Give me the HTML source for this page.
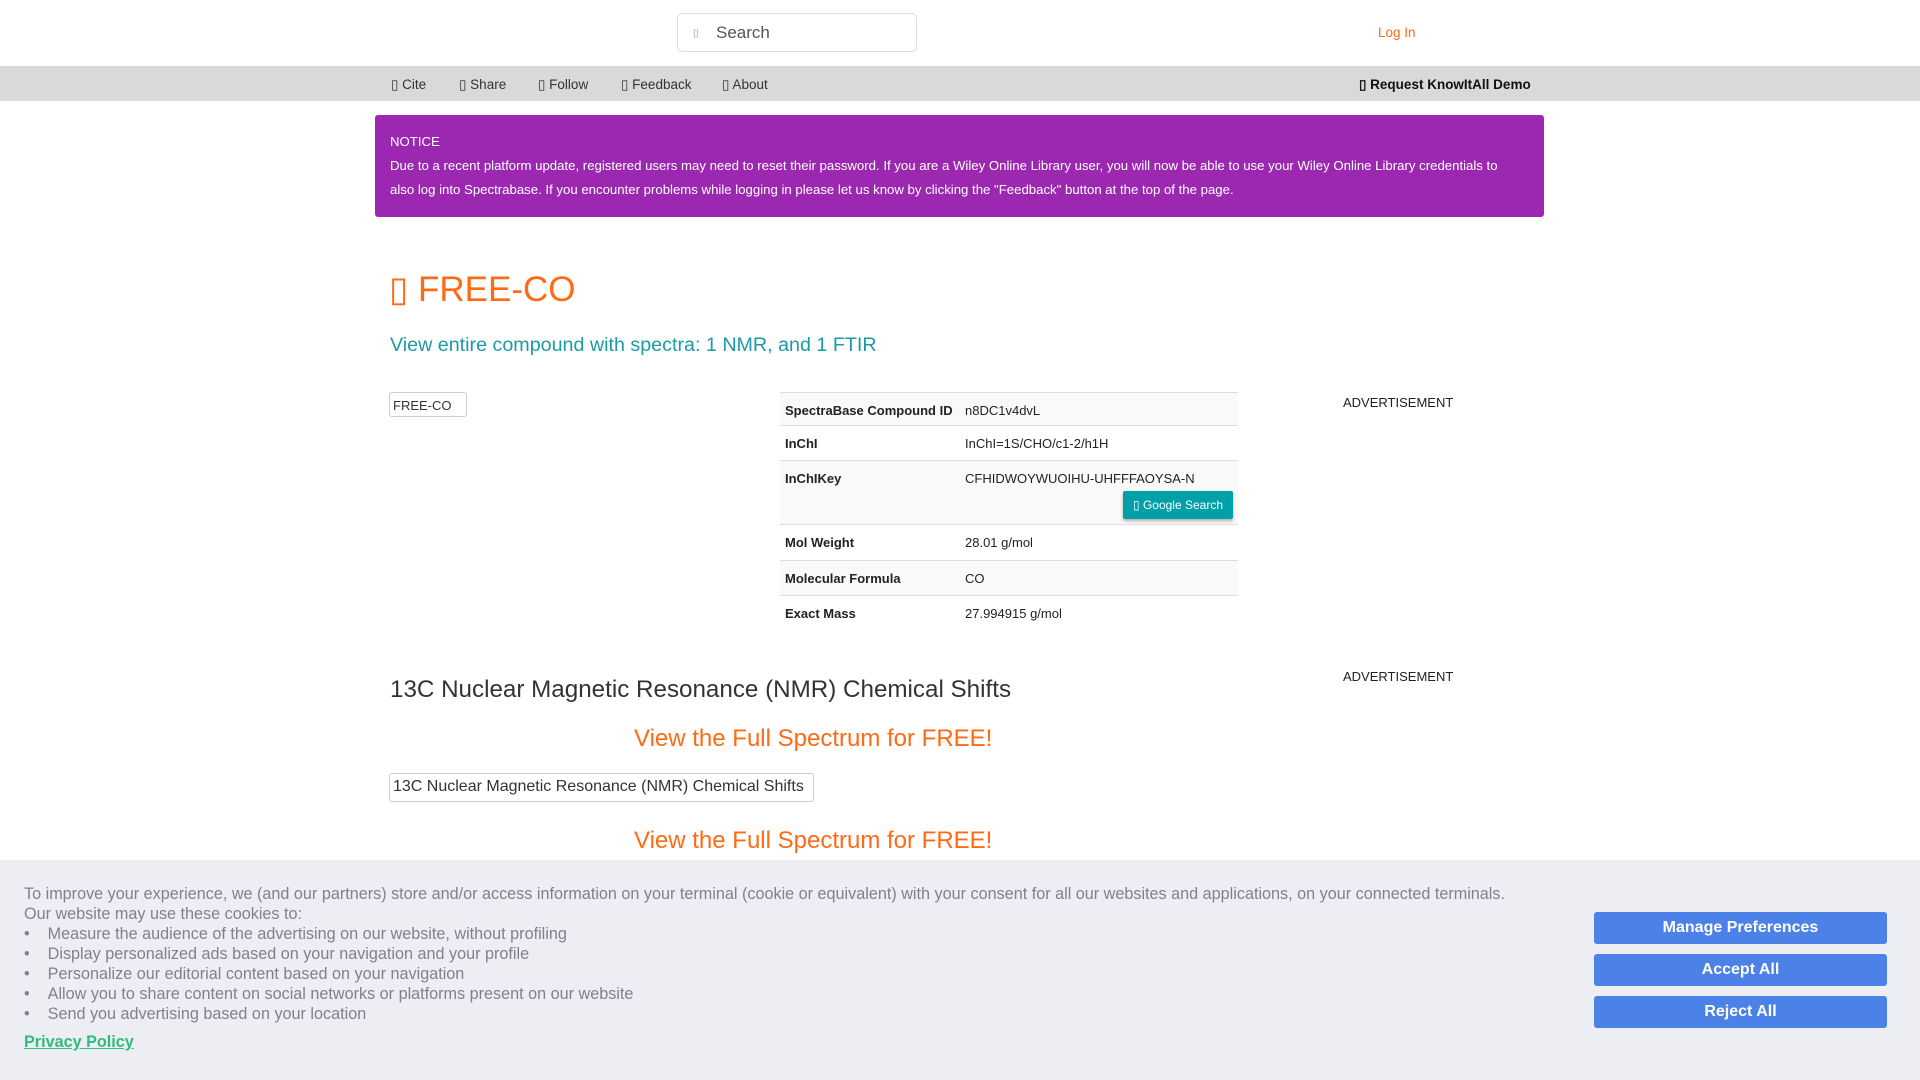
<!DOCTYPE html>
<html><head><meta charset="utf-8"><style>
*{margin:0;padding:0;box-sizing:border-box}
body{width:1920px;height:1080px;overflow:hidden;background:#fff;font-family:"Liberation Sans",Arial,sans-serif;position:relative;color:#333}
.a{position:absolute;white-space:nowrap}
.nav{position:absolute;left:0;top:66px;width:1920px;height:35px;background:#d9d9d9}
.nav span{position:absolute;top:11px;font-size:13.5px;color:#333}
.notice{position:absolute;left:375px;top:115px;width:1169px;height:102px;background:#9c27b0;border-radius:3px;color:#fff;font-size:13.2px;padding:0 15px}
.row{position:absolute;left:780px;width:458px;border-top:1px solid #ddd;font-size:13px;color:#222}
.row b{position:absolute;left:5px;top:10px}
.row i{font-style:normal;position:absolute;left:185px;top:10px}
.ban{position:absolute;left:0;top:860px;width:1920px;height:220px;background:#edeef3;color:#80808e;font-size:16.2px}
.btn{position:absolute;left:1594px;width:293px;height:32px;background:#4c82e8;border-radius:3px;color:#fff;font-weight:bold;font-size:16px;text-align:center;line-height:32px}
.orange{color:#ff6a13}
</style></head><body>
<div class="a" style="left:677px;top:13px;width:240px;height:39px;border:1px solid #ddd;border-radius:5px"></div>
<div class="a" style="left:693px;top:28px;font-size:10px;color:#999">▯</div>
<div class="a" style="left:716px;top:23px;font-size:17px;color:#555">Search</div>
<div class="a orange" style="left:1378px;top:25px;font-size:13.5px">Log In</div>
<div class="nav">
<span style="left:391px">▯ Cite</span><span style="left:459px">▯ Share</span><span style="left:538px">▯ Follow</span><span style="left:621px">▯ Feedback</span><span style="left:722px">▯ About</span>
<span style="left:1359px;font-weight:bold;color:#111">▯ Request KnowItAll Demo</span>
</div>
<div class="notice">
<div class="a" style="left:15px;top:19px">NOTICE</div>
<div class="a" style="left:15px;top:43px">Due to a recent platform update, registered users may need to reset their password. If you are a Wiley Online Library user, you will now be able to use your Wiley Online Library credentials to</div>
<div class="a" style="left:15px;top:67px">also log into Spectrabase. If you encounter problems while logging in please let us know by clicking the "Feedback" button at the top of the page.</div>
</div>
<div class="a orange" style="left:389px;top:270px;font-size:35px">▯ FREE-CO</div>
<div class="a" style="left:390px;top:334px;font-size:19.7px;color:#1a9ba6">View entire compound with spectra: 1 NMR, and 1 FTIR</div>
<div class="a" style="left:389px;top:392px;width:78px;height:25px;border:1px solid #ccc;border-radius:3px;font-size:13px;padding:5px 0 0 3px">FREE-CO</div>
<div class="row" style="top:392px;height:33px;background:#f9f9f9"><b>SpectraBase Compound ID</b><i>n8DC1v4dvL</i></div>
<div class="row" style="top:425px;height:35px"><b>InChI</b><i>InChI=1S/CHO/c1-2/h1H</i></div>
<div class="row" style="top:460px;height:64px;background:#f9f9f9"><b>InChIKey</b><i>CFHIDWOYWUOIHU-UHFFFAOYSA-N</i>
<div class="a" style="left:343px;top:30px;width:110px;height:28px;background:#00a0a8;color:#fff;font-size:12px;line-height:28px;text-align:center;border-radius:2px;box-shadow:0 2px 3px rgba(0,0,0,.3)">▯ Google Search</div></div>
<div class="row" style="top:524px;height:36px"><b>Mol Weight</b><i>28.01 g/mol</i></div>
<div class="row" style="top:560px;height:35px;background:#f9f9f9"><b>Molecular Formula</b><i>CO</i></div>
<div class="row" style="top:595px;height:34px"><b>Exact Mass</b><i>27.994915 g/mol</i></div>
<div class="a" style="left:1343px;top:395px;font-size:13px;color:#222">ADVERTISEMENT</div>
<div class="a" style="left:1343px;top:669px;font-size:13px;color:#222">ADVERTISEMENT</div>
<div class="a" style="left:390px;top:676px;font-size:24.2px;color:#333">13C Nuclear Magnetic Resonance (NMR) Chemical Shifts</div>
<div class="a orange" style="left:634px;top:725px;font-size:24px">View the Full Spectrum for FREE!</div>
<div class="a" style="left:389px;top:773px;width:425px;height:29px;border:1px solid #ccc;border-radius:3px;font-size:16px;padding:4px 0 0 3px">13C Nuclear Magnetic Resonance (NMR) Chemical Shifts</div>
<div class="a orange" style="left:634px;top:827px;font-size:24px">View the Full Spectrum for FREE!</div>
<div class="ban">
<div class="a" style="left:24px;top:25px">To improve your experience, we (and our partners) store and/or access information on your terminal (cookie or equivalent) with your consent for all our websites and applications, on your connected terminals.</div>
<div class="a" style="left:24px;top:45px">Our website may use these cookies to:</div>
<div class="a" style="left:24px;top:65px">•&nbsp;&nbsp;&nbsp;&nbsp;Measure the audience of the advertising on our website, without profiling</div>
<div class="a" style="left:24px;top:85px">•&nbsp;&nbsp;&nbsp;&nbsp;Display personalized ads based on your navigation and your profile</div>
<div class="a" style="left:24px;top:105px">•&nbsp;&nbsp;&nbsp;&nbsp;Personalize our editorial content based on your navigation</div>
<div class="a" style="left:24px;top:125px">•&nbsp;&nbsp;&nbsp;&nbsp;Allow you to share content on social networks or platforms present on our website</div>
<div class="a" style="left:24px;top:145px">•&nbsp;&nbsp;&nbsp;&nbsp;Send you advertising based on your location</div>
<div class="a" style="left:24px;top:173px;color:#2ebd7c;font-weight:bold;text-decoration:underline">Privacy Policy</div>
</div>
<div class="btn" style="top:912px">Manage Preferences</div>
<div class="btn" style="top:954px">Accept All</div>
<div class="btn" style="top:996px">Reject All</div>
</body></html>
